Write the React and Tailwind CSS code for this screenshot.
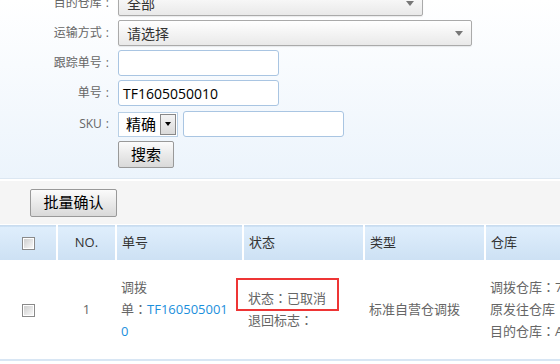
const labelCls = "w-[114px] shrink-0 text-right text-[12px] text-[#666] pr-[5px]";

// full-width colon, centred in its box the way the original font draws it
function Colon() {
  return <span className="font-['Noto_Sans_CJK_TC',sans-serif]">：</span>;
}

function Label({ text }) {
  return (
    <span className={labelCls}>
      {text}
      <span className="ml-[4px]">:</span>
    </span>
  );
}

function Select({ width, value }) {
  return (
    <div
      className={`${width} h-[26px] flex items-center justify-between px-[8px] border border-[#aaa] rounded-[2px] bg-gradient-to-b from-[#ffffff] to-[#e9e9e9] shadow-[0_1px_1px_rgba(0,0,0,0.08)]`}
    >
      <span className="text-[14px] text-[#333]">{value}</span>
      <span className="w-0 h-0 border-l-[4px] border-r-[4px] border-t-[5px] border-l-transparent border-r-transparent border-t-[#777]" />
    </div>
  );
}

function TextInput({ value }) {
  return (
    <div className="w-[161px] h-[26px] flex items-center px-[4px] border border-[#a9c5e2] rounded-[3px] bg-white text-[14px] text-black">
      {value}
    </div>
  );
}

function Button({ children, className }) {
  return (
    <div
      className={`${className} flex items-center justify-center border border-[#999] rounded-[2px] bg-gradient-to-b from-[#fbfbfb] to-[#d9d9d9] text-[15px] text-black`}
    >
      {children}
    </div>
  );
}

function Checkbox() {
  return (
    <span className="inline-block w-[13px] h-[13px] border border-[#8a8a8a] p-[1px] bg-white align-middle">
      <span className="block w-full h-full bg-gradient-to-br from-[#cfcfcf] to-[#f8f8f8]" />
    </span>
  );
}

export default function App() {
  return (
    <div className="w-[560px] h-[364px] overflow-hidden bg-white font-['Open_Sans','Noto_Sans_CJK_SC',sans-serif]">
      {/* search form */}
      <div className="h-[179px] flex flex-col bg-gradient-to-b from-[#ffffff] to-[#ecf4fc] border-b border-[#dce7f2]">
        <div className="mt-[-10px] flex flex-col gap-[4px]">
          <div className="flex items-center gap-[4px] h-[26px]">
            <Label text="目的仓库" />
            <Select width="w-[305px]" value="全部" />
          </div>
          <div className="flex items-center gap-[4px] h-[26px]">
            <Label text="运输方式" />
            <Select width="w-[354px]" value="请选择" />
          </div>
          <div className="flex items-center gap-[4px] h-[26px]">
            <Label text="跟踪单号" />
            <TextInput value="" />
          </div>
          <div className="flex items-center gap-[4px] h-[26px]">
            <Label text="单号" />
            <TextInput value="TF1605050010" />
          </div>
          <div className="flex items-center gap-[4px] h-[26px] mt-[1px]">
            <Label text="SKU" />
            <div className="w-[60px] h-[25px] flex items-center justify-between pl-[7px] pr-[1px] border border-[#b9d0e6] bg-white">
              <span className="text-[15px] text-black">精确</span>
              <span className="w-[16px] h-[21px] flex items-center justify-center border border-[#888] bg-gradient-to-b from-[#f4f4f4] to-[#dadada]">
                <span className="w-0 h-0 border-l-[3px] border-r-[3px] border-t-[4px] border-l-transparent border-r-transparent border-t-black" />
              </span>
            </div>
            <div className="ml-[1px]">
              <TextInput value="" />
            </div>
          </div>
          <div className="flex items-center gap-[4px] h-[27px]">
            <span className="w-[114px] shrink-0" />
            <Button className="w-[56px] h-[27px]">搜索</Button>
          </div>
        </div>
      </div>

      {/* toolbar */}
      <div className="border-t-[2px] border-white bg-[#f5f5f5] h-[46px] flex items-center pl-[30px] border-b-[1px] border-b-white">
        <Button className="w-[87px] h-[28px] text-[15px]">批量确认</Button>
      </div>

      {/* table */}
      <table className="table-fixed border-collapse w-[640px] text-[13px]">
        <colgroup>
          <col className="w-[57px]" />
          <col className="w-[59px]" />
          <col className="w-[127px]" />
          <col className="w-[121px]" />
          <col className="w-[121px]" />
          <col className="w-[155px]" />
        </colgroup>
        <thead>
          <tr className="h-[34px] bg-gradient-to-b from-[#dfeefc] to-[#cde1f4] text-[#333] border-t border-[#c9dcef]">
            <th className="font-normal text-center border-r-[2px] border-white">
              <Checkbox />
            </th>
            <th className="font-normal text-center border-r-[2px] border-white">NO.</th>
            <th className="font-normal text-left pl-[5px] border-r-[2px] border-white">单号</th>
            <th className="font-normal text-left pl-[5px] border-r-[2px] border-white">状态</th>
            <th className="font-normal text-left pl-[5px] border-r-[2px] border-white">类型</th>
            <th className="font-normal text-left pl-[5px]">仓库</th>
          </tr>
        </thead>
        <tbody>
          <tr className="h-[100px] text-[#666] leading-[22px] border-b-[2px] border-[#d8e6f4]">
            <td className="text-center align-middle">
              <Checkbox />
            </td>
            <td className="text-center align-middle">1</td>
            <td className="align-middle pl-[5px] pr-[4px]">
              <div>调拨</div>
              <div>
                单<Colon />
                <span className="text-[#1b8fdc]">TF160505001</span>
              </div>
              <div className="text-[#1b8fdc]">0</div>
            </td>
            <td className="align-middle pl-[5px]">
              <div className="relative">
                <div>
                  状态<Colon />已取消
                </div>
                <div>
                  退回标志<Colon />
                </div>
                <span className="absolute left-[-12px] top-[-9px] w-[103px] h-[33px] border-[2px] border-[#ee3535]" />
              </div>
            </td>
            <td className="align-middle pl-[5px]">标准自营仓调拨</td>
            <td className="align-middle pl-[5px] whitespace-nowrap">
              <div>
                调拨仓库<Colon />7号仓库
              </div>
              <div>
                原发往仓库<Colon />
              </div>
              <div>
                目的仓库<Colon />A仓
              </div>
            </td>
          </tr>
        </tbody>
      </table>
    </div>
  );
}
